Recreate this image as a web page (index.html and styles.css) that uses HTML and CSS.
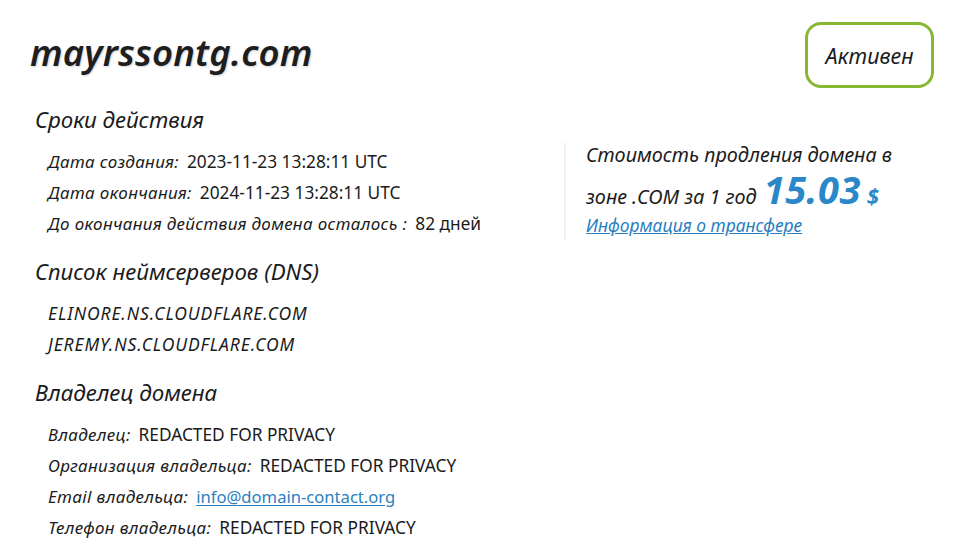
FILE: index.html
```html
<!DOCTYPE html>
<html lang="ru">
<head>
<meta charset="utf-8">
<link rel="stylesheet" href="styles.css">
</head>
<body>
<div class="page">
  <header class="top">
    <h1 class="domain">mayrssontg.com</h1>
    <div class="status">Активен</div>
  </header>
  <div class="body">
    <main class="main">
      <section class="section">
        <h2 class="sec-title">Сроки действия</h2>
        <div class="rows">
          <div class="row"><span class="label">Дата создания:</span><span class="val">2023-11-23 13:28:11 UTC</span></div>
          <div class="row"><span class="label">Дата окончания:</span><span class="val">2024-11-23 13:28:11 UTC</span></div>
          <div class="row"><span class="label">До окончания действия домена осталось :</span><span class="val">82 дней</span></div>
        </div>
      </section>
      <section class="section">
        <h2 class="sec-title">Список неймсерверов (DNS)</h2>
        <div class="rows">
          <div class="row ns">ELINORE.NS.CLOUDFLARE.COM</div>
          <div class="row ns">JEREMY.NS.CLOUDFLARE.COM</div>
        </div>
      </section>
      <section class="section">
        <h2 class="sec-title">Владелец домена</h2>
        <div class="rows">
          <div class="row"><span class="label">Владелец:</span><span class="val">REDACTED FOR PRIVACY</span></div>
          <div class="row"><span class="label">Организация владельца:</span><span class="val">REDACTED FOR PRIVACY</span></div>
          <div class="row"><span class="label">Email владельца:</span><a class="val link" href="#">info@domain-contact.org</a></div>
          <div class="row"><span class="label">Телефон владельца:</span><span class="val">REDACTED FOR PRIVACY</span></div>
        </div>
      </section>
    </main>
    <aside class="aside">
      <p class="price-text">Стоимость продления домена в<br>зоне .COM за 1 год <span class="price">15.03</span><span class="cur">$</span></p>
      <a class="transfer" href="#">Информация о трансфере</a>
    </aside>
  </div>
</div>
</body>
</html>
```
FILE: styles.css
```css
* { box-sizing: border-box; }
html, body { margin: 0; padding: 0; background: #fff; }
body {
  font-family: "Noto Sans", "DejaVu Sans", sans-serif;
  color: #1b1b1b;
  width: 970px;
  height: 550px;
  overflow: hidden;
}
.page { padding: 22px 36px 0 30px; }
.top {
  display: flex;
  justify-content: space-between;
  align-items: center;
  height: 66px;
}
.domain {
  margin: 0;
  font-size: 36.5px;
  font-style: italic;
  font-weight: 600;
  letter-spacing: 0.2px;
  color: #1e1e1e;
  text-shadow: 1px 1px 2px rgba(0,0,0,0.18);
  position: relative;
  top: -3px;
}
.status {
  width: 129px;
  height: 66px;
  border: 3px solid #86b832;
  border-radius: 16px;
  display: flex;
  align-items: center;
  justify-content: center;
  font-style: italic;
  font-size: 21.5px;
  color: #1b1b1b;
}
.body { display: flex; }
.main { width: 534px; padding-left: 5px; }
.section { margin-top: 18px; }
.section:first-child { margin-top: 17px; }
.sec-title {
  margin: 0 0 11px;
  font-size: 22.3px;
  line-height: 30px;
  font-weight: 400;
  font-style: italic;
  color: #1b1b1b;
}
.rows { padding-left: 13px; }
.row {
  display: flex;
  align-items: baseline;
  font-size: 17.3px;
  line-height: 31px;
  white-space: nowrap;
}
.label { font-style: italic; font-size: 17px; letter-spacing: 0.35px; margin-right: 8px; }
.val { font-style: normal; }
.ns { font-style: italic; font-size: 17.5px; letter-spacing: 0.9px; }
.link { color: #2a7fc0; text-decoration: underline; text-underline-offset: 2px; font-size: 16.6px; }
.aside {
  margin-top: 55px;
  height: 97px;
  border-left: 2px solid #f0f0f0;
  padding-left: 20px;
  align-self: flex-start;
}
.price-text {
  margin: 0;
  font-style: italic;
  font-size: 19.8px;
  line-height: 34px;
  position: relative;
  top: -5px;
  white-space: nowrap;
}
.price {
  font-size: 38px;
  font-weight: 700;
  color: #2a88c8;
  margin-left: 2px;
  letter-spacing: 0.5px;
}
.cur {
  font-size: 22px;
  font-weight: 700;
  color: #2a88c8;
  margin-left: 6px;
}
.transfer {
  display: block;
  font-style: italic;
  font-size: 17.5px;
  line-height: 20px;
  color: #2a7fc0;
  text-decoration: underline;
  margin-top: -4px;
}
```
